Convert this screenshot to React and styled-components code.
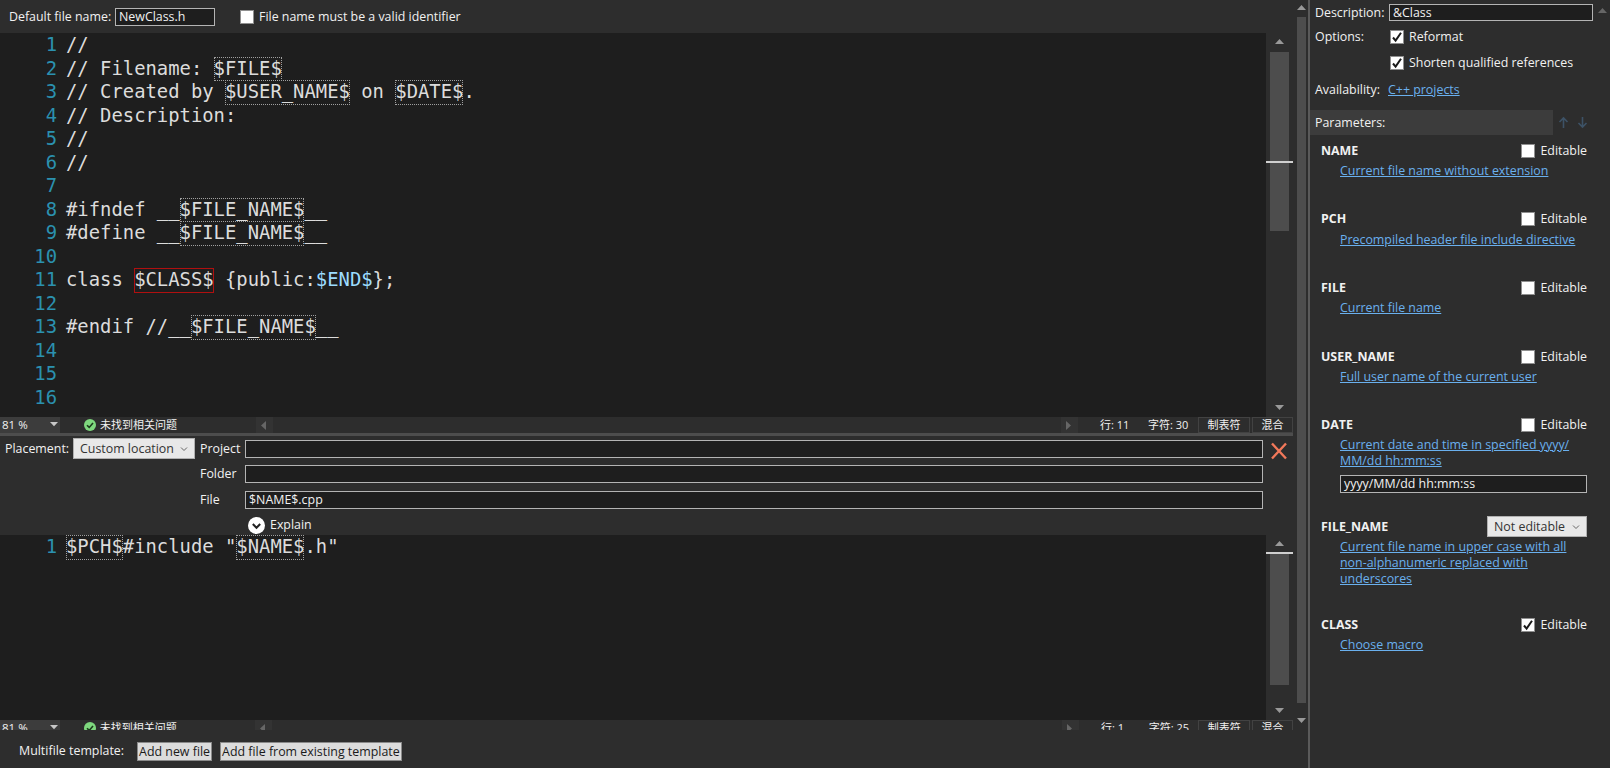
import React from 'react';
import styled, { createGlobalStyle } from 'styled-components';

const GlobalStyle = createGlobalStyle`
  html, body {
    margin: 0;
    height: 100%;
    background: #2d2d2d;
    overflow: hidden;
  }
  * { box-sizing: border-box; }
`;

const uiFont = '"Open Sans", "Noto Sans", "Noto Sans CJK SC", sans-serif';

const Window = styled.div`
  display: flex;
  width: 1610px;
  height: 768px;
  background: #2d2d2d;
  color: #f1f1f1;
  font: 12.4px/16px ${uiFont};
`;

const LeftColumn = styled.div`
  display: flex;
  flex-direction: column;
  width: 1293px;
`;

const TopBar = styled.div`
  display: flex;
  align-items: center;
  height: 33px;
  padding-left: 9px;
`;

const FileNameLabel = styled.span`
  width: 106px;
`;

const TextInput = styled.div`
  height: ${(p) => p.$h || 18}px;
  width: ${(p) => (p.$w ? `${p.$w}px` : 'auto')};
  flex: ${(p) => (p.$w ? 'none' : 1)};
  padding: 0 3px;
  background: #1e1e1e;
  border: 1px solid #b4b4b4;
  color: #f1f1f1;
  line-height: ${(p) => (p.$h || 18) - 2}px;
  white-space: nowrap;
`;

const CheckRow = styled.label`
  display: flex;
  align-items: center;
  gap: 5px;
  margin-left: ${(p) => p.$ml || 0}px;
`;

const Box = styled.span`
  display: flex;
  align-items: center;
  justify-content: center;
  width: 14px;
  height: 14px;
  background: #fff;
  border: 1px solid #8f8f8f;
`;

const Check = ({ on }) => (
  <Box>
    {on && (
      <svg width="12" height="12" viewBox="0 0 12 12">
        <path d="M2 6.5 L4.6 9.6 L10 1.8" fill="none" stroke="#1a1a1a" strokeWidth="2" />
      </svg>
    )}
  </Box>
);

const EditorArea = styled.div`
  display: flex;
  height: ${(p) => p.$h}px;
`;

const Code = styled.div`
  flex: 1;
  background: #1e1e1e;
  overflow: hidden;
  font: 18.88px/23.5px "DejaVu Sans Mono", "Liberation Mono", monospace;
  color: #dcdcdc;
`;

const CodeLine = styled.div`
  display: flex;
  height: 23.5px;
  white-space: pre;
`;

const LineNumber = styled.span`
  width: 57px;
  margin-right: 9px;
  text-align: right;
  color: #2b91af;
`;

const Macro = styled.span`
  display: inline-block;
  height: 24.5px;
  outline: 1px ${(p) => (p.$active ? 'solid #b01010' : 'dotted #a0a0a0')};
  outline-offset: -1px;
`;

const EndMark = styled.span`
  color: #9cdcfe;
`;

const ScrollColumn = styled.div`
  position: relative;
  display: flex;
  flex-direction: column;
  align-items: center;
  width: 27px;
  background: #2d2d2d;
`;

const ScrollCap = styled.div`
  display: flex;
  align-items: center;
  justify-content: center;
  flex: none;
  height: ${(p) => p.$h}px;
`;

const ScrollTrack = styled.div`
  flex: 1;
  width: 19px;
`;

const ScrollThumb = styled.div`
  width: 100%;
  height: ${(p) => p.$h}px;
  background: #4d4d4d;
`;

const CaretMark = styled.div`
  position: absolute;
  left: 0;
  right: 0;
  top: ${(p) => p.$top}px;
  height: 2px;
  background: #d0d0d0;
`;

const Triangle = ({ dir, color = '#999', size = 9 }) => {
  const points = {
    up: '0,6 4.5,1 9,6',
    down: '0,1 9,1 4.5,6',
    left: '6,0 6,9 1,4.5',
    right: '1,0 1,9 6,4.5',
  }[dir];
  return (
    <svg width={size} height={size} viewBox="0 0 9 9">
      <polygon points={points} fill={color} />
    </svg>
  );
};

const StatusWrap = styled.div`
  height: ${(p) => p.$h}px;
  overflow: hidden;
  flex: none;
`;

const StatusBar = styled.div`
  display: flex;
  align-items: center;
  height: 16px;
  background: #2d2d2d;
  line-height: 16px;
`;

const ZoomBox = styled.div`
  display: flex;
  align-items: center;
  justify-content: space-between;
  width: 60px;
  height: 16px;
  padding: 0 2px;
  background: #3c3c3c;
  font-size: 11.5px;
`;

const IssueState = styled.div`
  display: flex;
  align-items: center;
  gap: 4px;
  width: 196px;
  padding-left: 24px;
  font-size: 11px;
`;

const ScrollButton = styled.div`
  display: flex;
  align-items: center;
  justify-content: center;
  width: 17px;
  height: 16px;
  background: #333;
`;

const StatusSpacer = styled.div`
  width: ${(p) => p.$w}px;
`;

const CursorPos = styled.span`
  width: ${(p) => p.$w}px;
  font-size: 11px;
  white-space: nowrap;
`;

const StatusCell = styled.div`
  width: ${(p) => p.$w}px;
  height: 16px;
  margin-left: 2px;
  border: 1px solid #424242;
  font-size: 11px;
  line-height: 14px;
  text-align: center;
`;

const Splitter = styled.div`
  flex: none;
  height: 3px;
  background: #4d4d4d;
`;

const PlacementPanel = styled.div`
  display: flex;
  height: 99px;
`;

const PlacementLabel = styled.span`
  width: 73px;
  padding: 5px 0 0 5px;
`;

const Dropdown = styled.div`
  display: flex;
  align-items: center;
  justify-content: space-between;
  width: ${(p) => p.$w}px;
  height: 21px;
  margin-top: ${(p) => p.$mt || 0}px;
  padding: 0 6px;
  background: #e8e8e8;
  border: 1px solid #b0b0b0;
  color: #333;
  flex: none;
`;

const PlacementFields = styled.div`
  display: grid;
  flex: 1;
  grid-template-columns: 45px 1fr 30px;
  grid-auto-rows: 25.5px;
  align-items: center;
  margin-left: 5px;
`;

const CloseIcon = styled.svg`
  width: 18px;
  height: 18px;
  margin: 4px 0 0 7px;
`;

const ExplainRow = styled.div`
  grid-column: 2 / 4;
  display: flex;
  align-items: center;
  gap: 5px;
  padding-left: 3px;
`;

const OuterScroll = styled.div`
  display: flex;
  flex-direction: column;
  align-items: center;
  width: 15px;
  padding-right: 2px;
  padding-left: 4px;
  background: #2d2d2d;
`;

const OuterTrack = styled.div`
  width: 9px;
  height: 686px;
  background: #4d4d4d;
`;

const Divider = styled.div`
  width: 2px;
  background: #5a5a5a;
`;

const BottomBar = styled.div`
  display: flex;
  align-items: center;
  flex: 1;
  padding: 4px 0 0 19px;
`;

const FlatButton = styled.div`
  height: 19px;
  margin-left: ${(p) => p.$ml}px;
  padding: 0 1px;
  background: #dcdcdc;
  border: 1px solid #8a8a8a;
  color: #1a1a1a;
  line-height: 17px;
  white-space: nowrap;
`;

const SidePanel = styled.div`
  position: relative;
  width: 300px;
  padding-top: 4px;
`;

const SideRow = styled.div`
  display: flex;
  align-items: center;
  height: ${(p) => p.$h}px;
  margin-top: ${(p) => p.$mt || 0}px;
  padding-left: 5px;
`;

const SideLabel = styled.span`
  width: ${(p) => p.$w}px;
  flex: none;
`;

const Link = styled.a`
  color: #6ab0ee;
  text-decoration: underline;
`;

const ParamHeader = styled.div`
  display: flex;
  align-items: center;
  height: 25px;
  margin-top: 10px;
  padding-left: 5px;
  background: linear-gradient(to right, #3c3c3c 243px, transparent 243px);
`;

const SortArrows = styled.div`
  display: flex;
  gap: 6px;
  margin-left: auto;
  margin-right: 21px;
`;

const ParamList = styled.div`
  padding: 5px 23px 0 11px;
`;

const Param = styled.div`
  height: ${(p) => p.$h || 68.7}px;
`;

const ParamHead = styled.div`
  display: flex;
  align-items: center;
  justify-content: space-between;
  height: 21px;
`;

const ParamName = styled.span`
  font-weight: 700;
`;

const ParamBody = styled.div`
  padding: 2px 0 0 19px;
  line-height: 16px;
`;

const SideInput = styled(TextInput)`
  margin-top: 6px;
`;

const TopArrow = styled.div`
  position: absolute;
  top: 4px;
  right: 3px;
`;

const m = (text) => ({ macro: text });
const firstLines = [
  ['//'],
  ['// Filename: ', m('$FILE$')],
  ['// Created by ', m('$USER_NAME$'), ' on ', m('$DATE$'), '.'],
  ['// Description:'],
  ['//'],
  ['//'],
  [],
  ['#ifndef __', m('$FILE_NAME$'), '__'],
  ['#define __', m('$FILE_NAME$'), '__'],
  [],
  ['class ', { active: '$CLASS$' }, ' {public:', { end: '$END$' }, '};'],
  [],
  ['#endif //__', m('$FILE_NAME$'), '__'],
  [],
  [],
  [],
];
const secondLines = [[m('$PCH$'), '#include "', m('$NAME$'), '.h"']];

const renderPart = (part, i) => {
  if (typeof part === 'string') return <span key={i}>{part}</span>;
  if (part.macro) return <Macro key={i}>{part.macro}</Macro>;
  if (part.active) return <Macro key={i} $active>{part.active}</Macro>;
  return <EndMark key={i}>{part.end}</EndMark>;
};

const Editor = ({ lines, height, thumbHeight, caretTop }) => (
  <EditorArea $h={height}>
    <Code>
      {lines.map((parts, i) => (
        <CodeLine key={i}>
          <LineNumber>{i + 1}</LineNumber>
          <span>{parts.map(renderPart)}</span>
        </CodeLine>
      ))}
    </Code>
    <ScrollColumn>
      <ScrollCap $h={19}>
        <Triangle dir="up" />
      </ScrollCap>
      <ScrollTrack>
        <ScrollThumb $h={thumbHeight} />
      </ScrollTrack>
      <ScrollCap $h={18}>
        <Triangle dir="down" />
      </ScrollCap>
      <CaretMark $top={caretTop} />
    </ScrollColumn>
  </EditorArea>
);

const Status = ({ height, line, chars, gap }) => (
  <StatusWrap $h={height}>
    <StatusBar>
      <ZoomBox>
        81 %
        <Triangle dir="down" color="#c8c8c8" size={8} />
      </ZoomBox>
      <IssueState>
        <svg width="12" height="12" viewBox="0 0 12 12">
          <circle cx="6" cy="6" r="6" fill="#7ed87e" />
          <path d="M3 6.2 L5.2 8.4 L9 4" fill="none" stroke="#1c3a1c" strokeWidth="1.6" />
        </svg>
        未找到相关问题
      </IssueState>
      <ScrollButton>
        <Triangle dir="left" color="#666" />
      </ScrollButton>
      <StatusSpacer $w={gap} />
      <ScrollButton>
        <Triangle dir="right" color="#666" />
      </ScrollButton>
      <StatusSpacer $w={22} />
      <CursorPos $w={48}>行: {line}</CursorPos>
      <CursorPos $w={48}>字符: {chars}</CursorPos>
      <StatusCell $w={52}>制表符</StatusCell>
      <StatusCell $w={41}>混合</StatusCell>
    </StatusBar>
  </StatusWrap>
);

const params = [
  { name: 'NAME', link: 'Current file name without extension' },
  { name: 'PCH', link: 'Precompiled header file include directive' },
  { name: 'FILE', link: 'Current file name' },
  { name: 'USER_NAME', link: 'Full user name of the current user', height: 68 },
  {
    name: 'DATE',
    link: 'Current date and time in specified yyyy/ MM/dd hh:mm:ss',
    value: 'yyyy/MM/dd hh:mm:ss',
    height: 102,
  },
  {
    name: 'FILE_NAME',
    link: 'Current file name in upper case with all non-alphanumeric replaced with underscores',
    select: 'Not editable',
    height: 98,
  },
  { name: 'CLASS', link: 'Choose macro', checked: true },
];

const App = () => (
  <Window>
    <GlobalStyle />
    <LeftColumn>
      <TopBar>
        <FileNameLabel>Default file name:</FileNameLabel>
        <TextInput $w={100}>NewClass.h</TextInput>
        <CheckRow $ml={25}>
          <Check />
          File name must be a valid identifier
        </CheckRow>
      </TopBar>
      <Editor lines={firstLines} height={384} thumbHeight={179} caretTop={128} />
      <Status height={16} line="11" chars="30" gap={788} />
      <Splitter />
      <PlacementPanel>
        <PlacementLabel>Placement:</PlacementLabel>
        <Dropdown $w={122} $mt={2}>
          Custom location
          <svg width="8" height="8" viewBox="0 0 8 8">
            <path d="M1 2.5 L4 5.5 L7 2.5" fill="none" stroke="#666" />
          </svg>
        </Dropdown>
        <PlacementFields>
          <span>Project</span>
          <TextInput />
          <CloseIcon viewBox="0 0 18 18">
            <path d="M2 1.5 L16 16.5 M16 1.5 L2 16.5" stroke="#f2785a" strokeWidth="2.4" />
          </CloseIcon>
          <span>Folder</span>
          <TextInput />
          <span />
          <span>File</span>
          <TextInput>$NAME$.cpp</TextInput>
          <span />
          <span />
          <ExplainRow>
            <svg width="17" height="17" viewBox="0 0 17 17">
              <circle cx="8.5" cy="8.5" r="8.5" fill="#fff" />
              <path d="M4.8 7 L8.5 10.8 L12.2 7" fill="none" stroke="#222" strokeWidth="2" />
            </svg>
            Explain
          </ExplainRow>
        </PlacementFields>
      </PlacementPanel>
      <Editor lines={secondLines} height={185} thumbHeight={131} caretTop={17} />
      <Status height={10} line="1" chars="25" gap={795} />
      <BottomBar>
        Multifile template:
        <FlatButton $ml={13}>Add new file</FlatButton>
        <FlatButton $ml={8}>Add file from existing template</FlatButton>
      </BottomBar>
    </LeftColumn>
    <OuterScroll>
      <ScrollCap $h={17}>
        <Triangle dir="up" />
      </ScrollCap>
      <OuterTrack />
      <ScrollCap $h={36}>
        <Triangle dir="down" />
      </ScrollCap>
    </OuterScroll>
    <Divider />
    <SidePanel>
      <TopArrow>
        <Triangle dir="up" color="#666" />
      </TopArrow>
      <SideRow $h={17}>
        <SideLabel $w={74}>Description:</SideLabel>
        <TextInput $w={204} $h={17}>&amp;Class</TextInput>
      </SideRow>
      <SideRow $h={20} $mt={6}>
        <SideLabel $w={75}>Options:</SideLabel>
        <CheckRow>
          <Check on />
          Reformat
        </CheckRow>
      </SideRow>
      <SideRow $h={20} $mt={6}>
        <SideLabel $w={75} />
        <CheckRow>
          <Check on />
          Shorten qualified references
        </CheckRow>
      </SideRow>
      <SideRow $h={20} $mt={7}>
        <SideLabel $w={73}>Availability:</SideLabel>
        <Link>C++ projects</Link>
      </SideRow>
      <ParamHeader>
        Parameters:
        <SortArrows>
          <svg width="13" height="13" viewBox="0 0 13 13">
            <path d="M6.5 12 V2 M2.5 6 L6.5 2 L10.5 6" fill="none" stroke="#3d5266" strokeWidth="1.6" />
          </svg>
          <svg width="13" height="13" viewBox="0 0 13 13">
            <path d="M6.5 1 V11 M2.5 7 L6.5 11 L10.5 7" fill="none" stroke="#3d5266" strokeWidth="1.6" />
          </svg>
        </SortArrows>
      </ParamHeader>
      <ParamList>
        {params.map((p) => (
          <Param key={p.name} $h={p.height}>
            <ParamHead>
              <ParamName>{p.name}</ParamName>
              {p.select ? (
                <Dropdown $w={100}>
                  {p.select}
                  <svg width="8" height="8" viewBox="0 0 8 8">
                    <path d="M1 2.5 L4 5.5 L7 2.5" fill="none" stroke="#666" />
                  </svg>
                </Dropdown>
              ) : (
                <CheckRow>
                  <Check on={p.checked} />
                  Editable
                </CheckRow>
              )}
            </ParamHead>
            <ParamBody>
              <Link>{p.link}</Link>
              {p.value && <SideInput>{p.value}</SideInput>}
            </ParamBody>
          </Param>
        ))}
      </ParamList>
    </SidePanel>
  </Window>
);

export default App;
